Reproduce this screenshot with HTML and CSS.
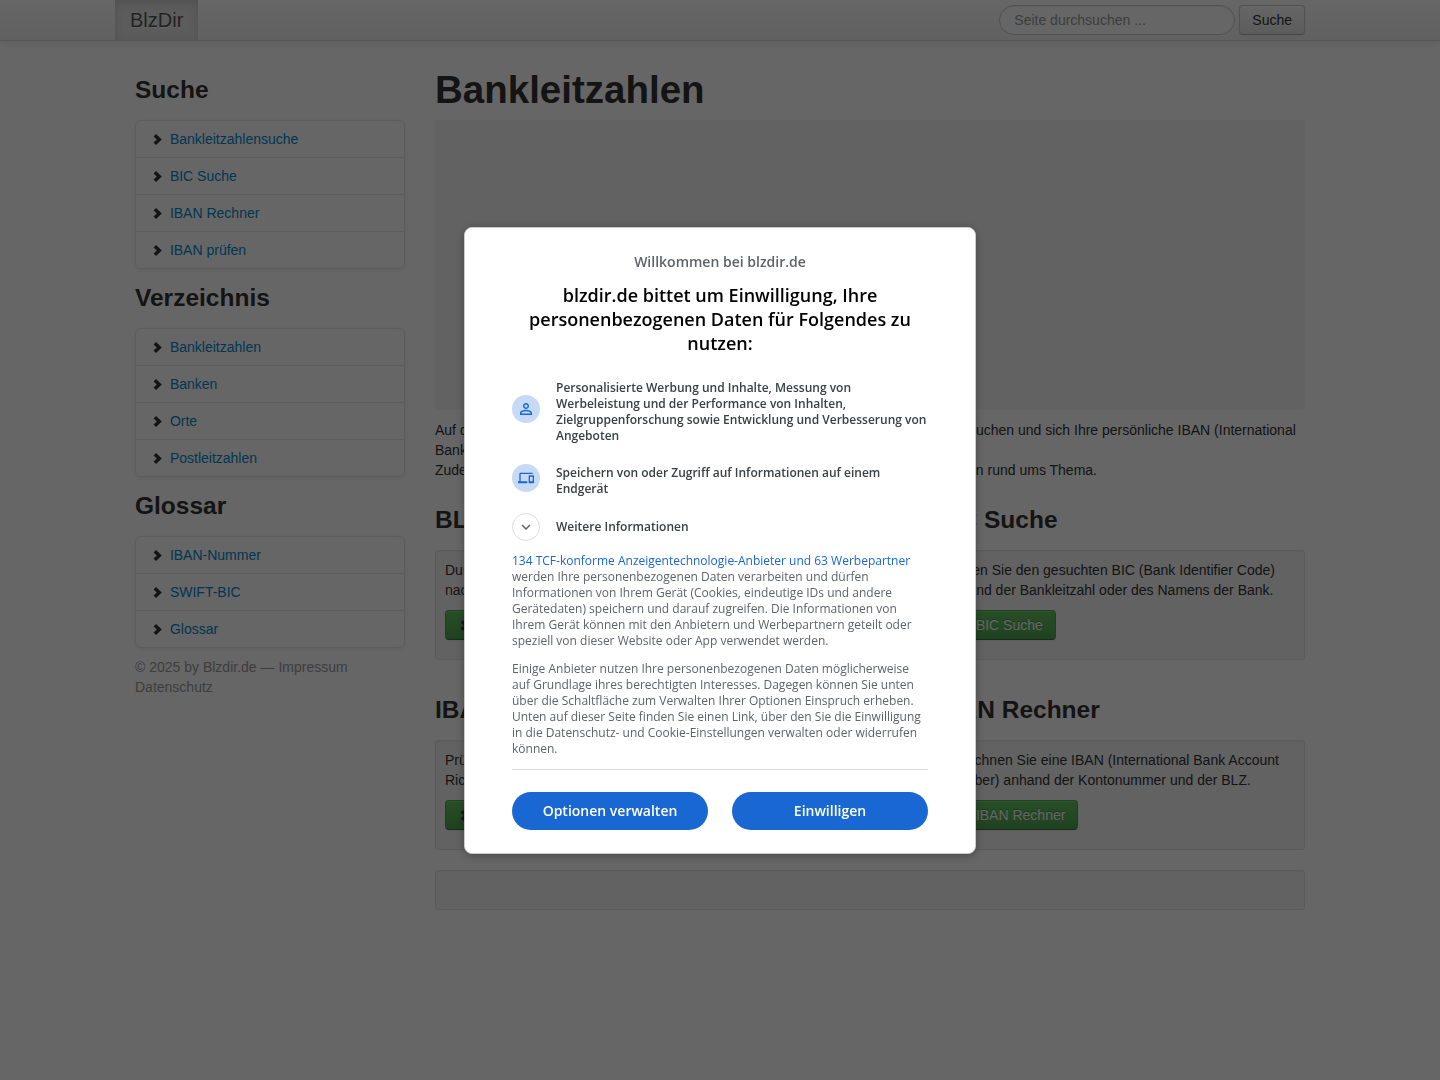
FILE: index.html
```html
<!DOCTYPE html>
<html lang="de">
<head>
    <meta charset="UTF-8">
    <meta name="viewport" content="width=device-width, initial-scale=1.0">
    <title>Bankleitzahlen - BlzDir</title>
    <link rel="stylesheet" href="styles.css">
</head>
<body>
    <svg class="sprite" width="0" height="0" aria-hidden="true">
        <symbol id="chevron" viewBox="0 0 14 14">
            <path d="M5 2 10.8 7.4 5 13 2.6 10.6 5.8 7.4 2.6 4.4z"/>
        </symbol>
    </svg>

    <!-- Navigation -->
    <header class="navbar">
        <div class="container navbar-inner">
            <a class="brand" href="#">BlzDir</a>
            <form class="navbar-search">
                <input type="text" class="search-query" placeholder="Seite durchsuchen ..." aria-label="Seite durchsuchen">
                <button type="button" class="btn">Suche</button>
            </form>
        </div>
    </header>

    <div class="container page">
        <!-- Sidebar -->
        <aside class="sidebar">
            <h3>Suche</h3>
            <ul class="nav-list">
                <li><a href="#"><svg class="icon"><use href="#chevron"/></svg> Bankleitzahlensuche</a></li>
                <li><a href="#"><svg class="icon"><use href="#chevron"/></svg> BIC Suche</a></li>
                <li><a href="#"><svg class="icon"><use href="#chevron"/></svg> IBAN Rechner</a></li>
                <li><a href="#"><svg class="icon"><use href="#chevron"/></svg> IBAN prüfen</a></li>
            </ul>
            <h3>Verzeichnis</h3>
            <ul class="nav-list">
                <li><a href="#"><svg class="icon"><use href="#chevron"/></svg> Bankleitzahlen</a></li>
                <li><a href="#"><svg class="icon"><use href="#chevron"/></svg> Banken</a></li>
                <li><a href="#"><svg class="icon"><use href="#chevron"/></svg> Orte</a></li>
                <li><a href="#"><svg class="icon"><use href="#chevron"/></svg> Postleitzahlen</a></li>
            </ul>
            <h3>Glossar</h3>
            <ul class="nav-list">
                <li><a href="#"><svg class="icon"><use href="#chevron"/></svg> IBAN-Nummer</a></li>
                <li><a href="#"><svg class="icon"><use href="#chevron"/></svg> SWIFT-BIC</a></li>
                <li><a href="#"><svg class="icon"><use href="#chevron"/></svg> Glossar</a></li>
            </ul>
            <p class="muted">© 2025 by Blzdir.de — <a href="#">Impressum</a><br><a href="#">Datenschutz</a></p>
        </aside>

        <!-- Content -->
        <main class="content">
            <h1>Bankleitzahlen</h1>
            <div class="ad"></div>
            <p class="intro">Auf den folgenden Seiten können Sie Bankleitzahlen sowie deren zugehörige Banken suchen und sich Ihre persönliche IBAN (International Bank Account Number) berechnen lassen.<br>
            Zudem finden Sie auf Blzdir.de ein Verzeichnis aller Banken sowie weitere Informationen rund ums Thema.</p>

            <div class="row">
                <section>
                    <h3>BLZ Suche</h3>
                    <div class="well">
                        <p>Durchsuchen Sie das Verzeichnis<br>nach Bankleitzahlen und Banken.</p>
                        <p><a class="btn btn-success" href="#"><svg class="icon"><use href="#chevron"/></svg> BLZ Suche</a></p>
                    </div>
                </section>
                <section>
                    <h3>BIC Suche</h3>
                    <div class="well">
                        <p>Finden Sie den gesuchten BIC (Bank Identifier Code) anhand der Bankleitzahl oder des Namens der Bank.</p>
                        <p><a class="btn btn-success" href="#"><svg class="icon"><use href="#chevron"/></svg> BIC Suche</a></p>
                    </div>
                </section>
            </div>

            <div class="row">
                <section>
                    <h3>IBAN prüfen</h3>
                    <div class="well">
                        <p>Prüfen Sie eine IBAN auf ihre<br>Richtigkeit.</p>
                        <p><a class="btn btn-success" href="#"><svg class="icon"><use href="#chevron"/></svg> IBAN prüfen</a></p>
                    </div>
                </section>
                <section>
                    <h3>IBAN Rechner</h3>
                    <div class="well">
                        <p>Berechnen Sie eine IBAN (International Bank Account Number) anhand der Kontonummer und der BLZ.</p>
                        <p><a class="btn btn-success" href="#"><svg class="icon"><use href="#chevron"/></svg> IBAN Rechner</a></p>
                    </div>
                </section>
            </div>

            <div class="well"></div>
        </main>
    </div>

    <!-- Consent dialog -->
    <div class="overlay">
        <div class="dialog" role="dialog" aria-modal="true" aria-labelledby="dialog-title">
            <p class="welcome">Willkommen bei blzdir.de</p>
            <h2 id="dialog-title">blzdir.de bittet um Einwilligung, Ihre personenbezogenen Daten für Folgendes zu nutzen:</h2>

            <ul class="purposes">
                <li>
                    <span class="badge">
                        <svg width="18" height="18" viewBox="0 0 24 24"><path d="M12 5.9a2.1 2.1 0 1 1 0 4.2 2.1 2.1 0 0 1 0-4.2m0 9c2.97 0 6.1 1.46 6.1 2.1v1.1H5.9V17c0-.64 3.13-2.1 6.1-2.1M12 4C9.79 4 8 5.79 8 8s1.79 4 4 4 4-1.79 4-4-1.79-4-4-4zm0 9c-2.67 0-8 1.34-8 4v3h16v-3c0-2.66-5.33-4-8-4z"/></svg>
                    </span>
                    <span>Personalisierte Werbung und Inhalte, Messung von Werbeleistung und der Performance von Inhalten, Zielgruppenforschung sowie Entwicklung und Verbesserung von Angeboten</span>
                </li>
                <li>
                    <span class="badge">
                        <svg width="16" height="16" viewBox="0 0 24 24"><path d="M4 6h18V4H4c-1.1 0-2 .9-2 2v11H0v3h14v-3H4V6zm19 2h-6c-.55 0-1 .45-1 1v10c0 .55.45 1 1 1h6c.55 0 1-.45 1-1V9c0-.55-.45-1-1-1zm-1 9h-4v-7h4v7z"/></svg>
                    </span>
                    <span>Speichern von oder Zugriff auf Informationen auf einem Endgerät</span>
                </li>
            </ul>

            <button type="button" class="more">
                <span class="badge badge-outline">
                    <svg width="18" height="18" viewBox="0 0 24 24"><path d="M7.41 8.59 12 13.17l4.59-4.58L18 10l-6 6-6-6z"/></svg>
                </span>
                <span>Weitere Informationen</span>
            </button>

            <p class="text"><a href="#">134 TCF-konforme Anzeigentechnologie-Anbieter und 63 Werbepartner</a> werden Ihre personenbezogenen Daten verarbeiten und dürfen Informationen von Ihrem Gerät (Cookies, eindeutige IDs und andere Gerätedaten) speichern und darauf zugreifen. Die Informationen von Ihrem Gerät können mit den Anbietern und Werbepartnern geteilt oder speziell von dieser Website oder App verwendet werden.</p>
            <p class="text">Einige Anbieter nutzen Ihre personenbezogenen Daten möglicherweise auf Grundlage ihres berechtigten Interesses. Dagegen können Sie unten über die Schaltfläche zum Verwalten Ihrer Optionen Einspruch erheben. Unten auf dieser Seite finden Sie einen Link, über den Sie die Einwilligung in die Datenschutz- und Cookie-Einstellungen verwalten oder widerrufen können.</p>

            <div class="actions">
                <button type="button">Optionen verwalten</button>
                <button type="button">Einwilligen</button>
            </div>
        </div>
    </div>
</body>
</html>
```
FILE: styles.css
```css
* {
    box-sizing: border-box;
}

body {
    margin: 0;
    font-family: "Helvetica Neue", Helvetica, "Liberation Sans", Arial, sans-serif;
    font-size: 14px;
    line-height: 20px;
    color: #333;
    background-color: #fff;
}

a {
    color: #08c;
    text-decoration: none;
}

p {
    margin: 0 0 10px;
}

h1, h3 {
    margin: 10px 0;
    line-height: 40px;
    text-rendering: optimizelegibility;
}

h1 {
    font-size: 38.5px;
}

h3 {
    font-size: 24.5px;
}

.sprite {
    position: absolute;
}

.icon {
    width: 14px;
    height: 14px;
    margin-top: 1px;
    vertical-align: text-top;
    fill: #333;
}

.container {
    width: 100%;
    max-width: 1170px;
    margin: 0 auto;
}

/* Navbar */
.navbar {
    border-bottom: 1px solid #d4d4d4;
    background-image: linear-gradient(to bottom, #fff, #f2f2f2);
    box-shadow: 0 1px 10px rgba(0, 0, 0, 0.1);
}

.navbar-inner {
    display: flex;
    justify-content: space-between;
    align-items: center;
}

.brand {
    margin-left: -20px;
    padding: 10px 15px;
    font-size: 20px;
    color: #555;
    text-shadow: 0 1px 0 #fff;
    background-color: #e5e5e5;
    box-shadow: inset 0 3px 8px rgba(0, 0, 0, 0.125);
}

.navbar-search {
    display: flex;
    gap: 4px;
}

.search-query {
    width: 236px;
    height: 30px;
    padding: 4px 14px;
    border: 1px solid #ccc;
    border-radius: 15px;
    font: inherit;
    color: #555;
    background-color: #fff;
    box-shadow: inset 0 1px 1px rgba(0, 0, 0, 0.075);
}

.search-query::placeholder {
    color: #999;
}

.btn {
    display: inline-block;
    padding: 4px 12px;
    border: 1px solid #ccc;
    border-bottom-color: #b3b3b3;
    border-radius: 4px;
    font: inherit;
    color: #333;
    text-shadow: 0 1px 1px rgba(255, 255, 255, 0.75);
    background-image: linear-gradient(to bottom, #fff, #e6e6e6);
    box-shadow: inset 0 1px 0 rgba(255, 255, 255, 0.2), 0 1px 2px rgba(0, 0, 0, 0.05);
    cursor: pointer;
}

.btn-success {
    border-color: #51a351 #51a351 #387038;
    color: #fff;
    text-shadow: 0 -1px 0 rgba(0, 0, 0, 0.25);
    background-image: linear-gradient(to bottom, #62c462, #51a351);
}

/* Page */
.page {
    display: grid;
    grid-template-columns: 270px 1fr;
    gap: 30px;
    padding-top: 19px;
}

.nav-list {
    margin: 0 0 10px;
    padding: 0;
    list-style: none;
    border-radius: 6px;
    box-shadow: 0 1px 4px rgba(0, 0, 0, 0.067);
}

.nav-list a {
    display: block;
    margin-bottom: -1px;
    padding: 8px 15px;
    border: 1px solid #e5e5e5;
}

.nav-list li:first-child a {
    border-radius: 6px 6px 0 0;
}

.nav-list li:last-child a {
    border-radius: 0 0 6px 6px;
}

.nav-list .icon {
    margin-right: 1px;
}

.muted,
.muted a {
    color: #999;
}

.ad {
    height: 290px;
    margin-bottom: 10px;
    border-radius: 4px;
    background-color: #f5f5f5;
}

.intro {
    margin-bottom: 10px;
}

.row {
    display: grid;
    grid-template-columns: 47fr 37fr;
    gap: 30px;
}

.well {
    min-height: 40px;
    margin-bottom: 20px;
    padding: 9px;
    border: 1px solid #e3e3e3;
    border-radius: 3px;
    background-color: #f5f5f5;
    box-shadow: inset 0 1px 1px rgba(0, 0, 0, 0.05);
}

/* Consent dialog */
.overlay {
    position: fixed;
    inset: 0;
    display: flex;
    justify-content: center;
    align-items: center;
    background-color: rgba(0, 0, 0, 0.6);
}

.dialog {
    width: 512px;
    padding: 24px 47px 23px;
    border: 1px solid #ccc;
    border-radius: 8px;
    font-family: "Open Sans", sans-serif;
    font-size: 12px;
    line-height: 16px;
    color: #5f6368;
    background-color: #fff;
    box-shadow: 0 2px 10px rgba(0, 0, 0, 0.3);
}

.welcome {
    margin: 0 0 11px;
    font-size: 14px;
    line-height: 20px;
    font-weight: 600;
    text-align: center;
}

.dialog h2 {
    margin: 0 0 25px;
    font-size: 18px;
    line-height: 24px;
    font-weight: 600;
    text-align: center;
    color: #000;
}

.purposes {
    margin: 0 0 15px;
    padding: 0;
    list-style: none;
    display: grid;
    gap: 20px;
}

.purposes li,
.more {
    display: flex;
    align-items: center;
    gap: 16px;
    font-weight: 600;
    color: #3c4043;
}

.badge {
    display: flex;
    flex: none;
    justify-content: center;
    align-items: center;
    width: 28px;
    height: 28px;
    margin-bottom: 6px;
    border-radius: 50%;
    background-color: #c6daf6;
    fill: #1967d2;
}

.badge-outline {
    margin-bottom: 0;
    border: 1px solid #dadce0;
    background-color: #fff;
    fill: #5f6368;
}

.more {
    margin-bottom: 12px;
    padding: 0;
    border: none;
    font-family: inherit;
    font-size: 12px;
    line-height: 16px;
    background: none;
    cursor: pointer;
}

.text {
    margin-bottom: 12px;
}

.text a {
    color: #1967d2;
}

.actions {
    display: flex;
    gap: 24px;
    padding-top: 22px;
    border-top: 1px solid #dadce0;
}

.actions button {
    flex: 1;
    height: 38px;
    border: none;
    border-radius: 19px;
    font-family: inherit;
    font-size: 14px;
    font-weight: 600;
    color: #fff;
    background-color: #1967d2;
    cursor: pointer;
}
```
